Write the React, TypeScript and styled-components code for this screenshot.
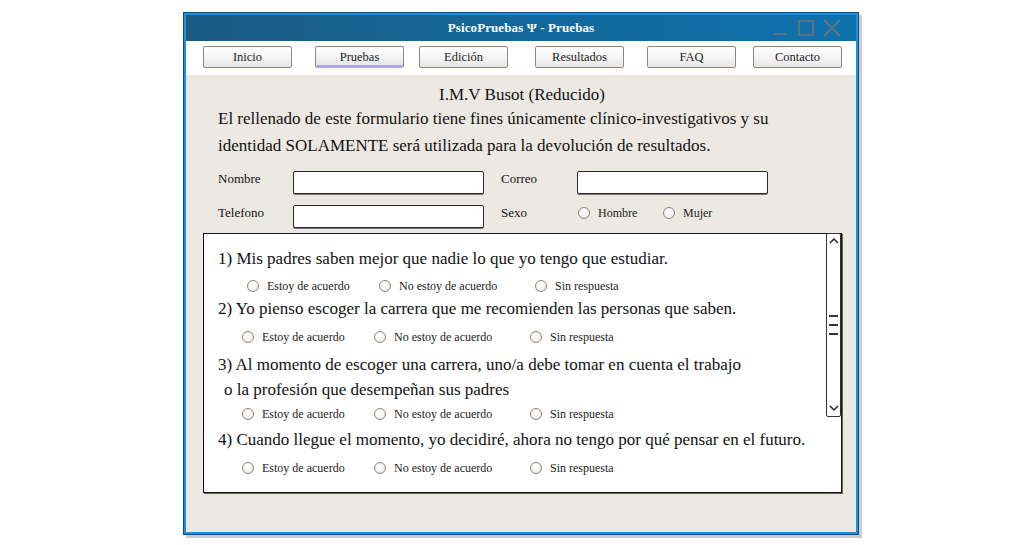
import React from "react";
import styled, { createGlobalStyle } from "styled-components";

const Global = createGlobalStyle`
  html, body { margin: 0; padding: 0; background: #ffffff; }
  body { font-family: "Liberation Serif", "Times New Roman", serif; color: #111; }
  * { box-sizing: border-box; }
`;

const Page = styled.div`
  width: 1028px;
  height: 545px;
  padding: 12px 0 0 183px;
`;

const Window = styled.div`
  width: 676px;
  height: 523px;
  border: 1px solid #0b4e85;
  box-shadow: 3px 3px 0 #cdcdcd;
  display: flex;
`;

const Frame = styled.div`
  flex: 1;
  border: 2px solid #1f8fdc;
  display: flex;
  flex-direction: column;
`;

const TitleBar = styled.div`
  height: 26px;
  background: linear-gradient(90deg, #1c5b82 0%, #13679a 50%, #0f72ad 100%);
  display: grid;
  grid-template-columns: 1fr auto 1fr;
  align-items: center;
`;

const Title = styled.div`
  grid-column: 2;
  color: #fff;
  font-weight: bold;
  font-size: 13px;
  letter-spacing: 0.1px;
`;

const Controls = styled.div`
  grid-column: 3;
  justify-self: end;
  display: flex;
  align-items: center;
  padding-right: 6px;
  height: 26px;
`;

const Nav = styled.div`
  height: 34px;
  background: #fff;
  display: flex;
  padding: 5px 0 0 17px;
`;

const NavButton = styled.div<{ $active?: boolean; $ml: number }>`
  width: 89px;
  height: 22px;
  margin-left: ${(p) => p.$ml}px;
  border: 1px solid #8e8478;
  border-radius: 2px;
  background: linear-gradient(180deg, #ffffff 0%, #f4f4f4 55%, #e6e6e6 100%);
  font-size: 12.5px;
  display: flex;
  align-items: center;
  justify-content: center;
  color: #222;
  ${(p) => (p.$active ? "border-bottom: 3px solid #aea6e2; padding-top: 2px;" : "")}
`;

const Body = styled.div`
  flex: 1;
  background: #ece9e3;
  padding-top: 10px;
  display: flex;
  flex-direction: column;
`;

const Heading = styled.div`
  text-align: center;
  font-size: 17px;
  line-height: 20px;
  padding-left: 2px;
`;

const Intro = styled.p`
  margin: 0;
  padding-left: 32px;
  font-size: 17px;
  line-height: 27px;
`;

const FormGrid = styled.div`
  display: grid;
  grid-template-columns: 75px 191px 17px 76px 191px;
  grid-auto-rows: 23px;
  row-gap: 11px;
  margin: 12px 0 0 32px;
`;

const Label = styled.div<{ $col: number }>`
  grid-column: ${(p) => p.$col};
  font-size: 13px;
  line-height: 16px;
  align-self: start;
`;

const Input = styled.div<{ $col: number }>`
  grid-column: ${(p) => p.$col};
  border: 1.5px solid #2a2a2a;
  border-radius: 2px;
  background: #fff;
  box-shadow: 0 1px 0 #777;
`;

const InlineRadios = styled.div<{ $col: number }>`
  grid-column: ${(p) => p.$col} / span 2;
  display: flex;
  align-items: center;
  height: 16px;
  padding-left: 1px;
`;

const Option = styled.label<{ $w?: number }>`
  display: flex;
  align-items: center;
  gap: 8px;
  width: ${(p) => (p.$w ? `${p.$w}px` : "auto")};
  font-size: 12px;
  line-height: 16px;
  color: #222;
`;

const Circle = styled.span`
  width: 12px;
  height: 12px;
  border-radius: 50%;
  border: 1.5px solid #8f8577;
  background: radial-gradient(circle at 40% 35%, #ffffff 0%, #f2f2f2 60%, #e2e2e2 100%);
  flex: none;
`;

const QuestionBox = styled.div`
  position: relative;
  margin: 5px 14px 0 17px;
  height: 260px;
  background: #fff;
  border: 1px solid #111;
  box-shadow: 1px 1px 0 #666;
  padding: 12px 0 0 14px;
`;

const QText = styled.div<{ $mt: number }>`
  margin-top: ${(p) => p.$mt}px;
  font-size: 17px;
  line-height: 25px;
`;

const Indent = styled.span`
  padding-left: 6px;
`;

const ORow = styled.div<{ $mt: number; $indent: number }>`
  margin-top: ${(p) => p.$mt}px;
  padding-left: ${(p) => p.$indent}px;
  display: flex;
  height: 16px;
  align-items: center;
`;

const Scrollbar = styled.div`
  position: absolute;
  top: -1px;
  right: 0;
  width: 15px;
  height: 184px;
  background: #fff;
  border: 1.5px solid #333;
  border-radius: 2px;
  display: flex;
  flex-direction: column;
  align-items: center;
  justify-content: space-between;
  padding: 3px 0 4px;
`;

const Grip = styled.div`
  display: flex;
  flex-direction: column;
  gap: 7px;
  width: 9px;
`;

const GripLine = styled.div`
  height: 2px;
  background: #333;
`;

const Radio = ({ label, w }: { label: string; w?: number }) => (
  <Option $w={w}>
    <Circle />
    {label}
  </Option>
);

const Answers = ({ mt, indent }: { mt: number; indent: number }) => (
  <ORow $mt={mt} $indent={indent}>
    <Radio label="Estoy de acuerdo" w={132} />
    <Radio label="No estoy de acuerdo" w={156} />
    <Radio label="Sin respuesta" />
  </ORow>
);

const navItems: { label: string; ml: number; active?: boolean }[] = [
  { label: "Inicio", ml: 0 },
  { label: "Pruebas", ml: 23, active: true },
  { label: "Edición", ml: 15 },
  { label: "Resultados", ml: 27 },
  { label: "FAQ", ml: 23 },
  { label: "Contacto", ml: 17 },
];

export default function App() {
  return (
    <Page>
      <Global />
      <Window>
        <Frame>
          <TitleBar>
            <Title>PsicoPruebas Ψ - Pruebas</Title>
            <Controls>
              <svg width="80" height="22" viewBox="0 0 80 22" fill="none" stroke="#5f7283" strokeWidth="2">
                <line x1="4" y1="17" x2="17" y2="17" />
                <rect x="29" y="4" width="14" height="14" />
                <line x1="54" y1="3" x2="70" y2="19" />
                <line x1="70" y1="3" x2="54" y2="19" />
              </svg>
            </Controls>
          </TitleBar>
          <Nav>
            {navItems.map((n) => (
              <NavButton key={n.label} $ml={n.ml} $active={n.active}>
                {n.label}
              </NavButton>
            ))}
          </Nav>
          <Body>
            <Heading>I.M.V Busot (Reducido)</Heading>
            <Intro>
              El rellenado de este formulario tiene fines únicamente clínico-investigativos y su
              <br />
              identidad SOLAMENTE será utilizada para la devolución de resultados.
            </Intro>
            <FormGrid>
              <Label $col={1}>Nombre</Label>
              <Input $col={2} />
              <Label $col={4}>Correo</Label>
              <Input $col={5} />
              <Label $col={1}>Telefono</Label>
              <Input $col={2} />
              <Label $col={4}>Sexo</Label>
              <InlineRadios $col={5}>
                <Radio label="Hombre" w={85} />
                <Radio label="Mujer" />
              </InlineRadios>
            </FormGrid>
            <QuestionBox>
              <QText $mt={0}>1) Mis padres saben mejor que nadie lo que yo tengo que estudiar.</QText>
              <Answers mt={7} indent={29} />
              <QText $mt={2}>2) Yo pienso escoger la carrera que me recomienden las personas que saben.</QText>
              <Answers mt={8} indent={24} />
              <QText $mt={7}>
                3) Al momento de escoger una carrera, uno/a debe tomar en cuenta el trabajo
                <br />
                <Indent>o la profesión que desempeñan sus padres</Indent>
              </QText>
              <Answers mt={4} indent={24} />
              <QText $mt={5}>4) Cuando llegue el momento, yo decidiré, ahora no tengo por qué pensar en el futuro.</QText>
              <Answers mt={8} indent={24} />
              <Scrollbar>
                <svg width="10" height="7" viewBox="0 0 10 7" fill="none" stroke="#222" strokeWidth="1.5">
                  <polyline points="1,6 5,2 9,6" />
                </svg>
                <Grip>
                  <GripLine />
                  <GripLine />
                  <GripLine />
                </Grip>
                <svg width="10" height="7" viewBox="0 0 10 7" fill="none" stroke="#222" strokeWidth="1.5">
                  <polyline points="1,1 5,5 9,1" />
                </svg>
              </Scrollbar>
            </QuestionBox>
          </Body>
        </Frame>
      </Window>
    </Page>
  );
}
